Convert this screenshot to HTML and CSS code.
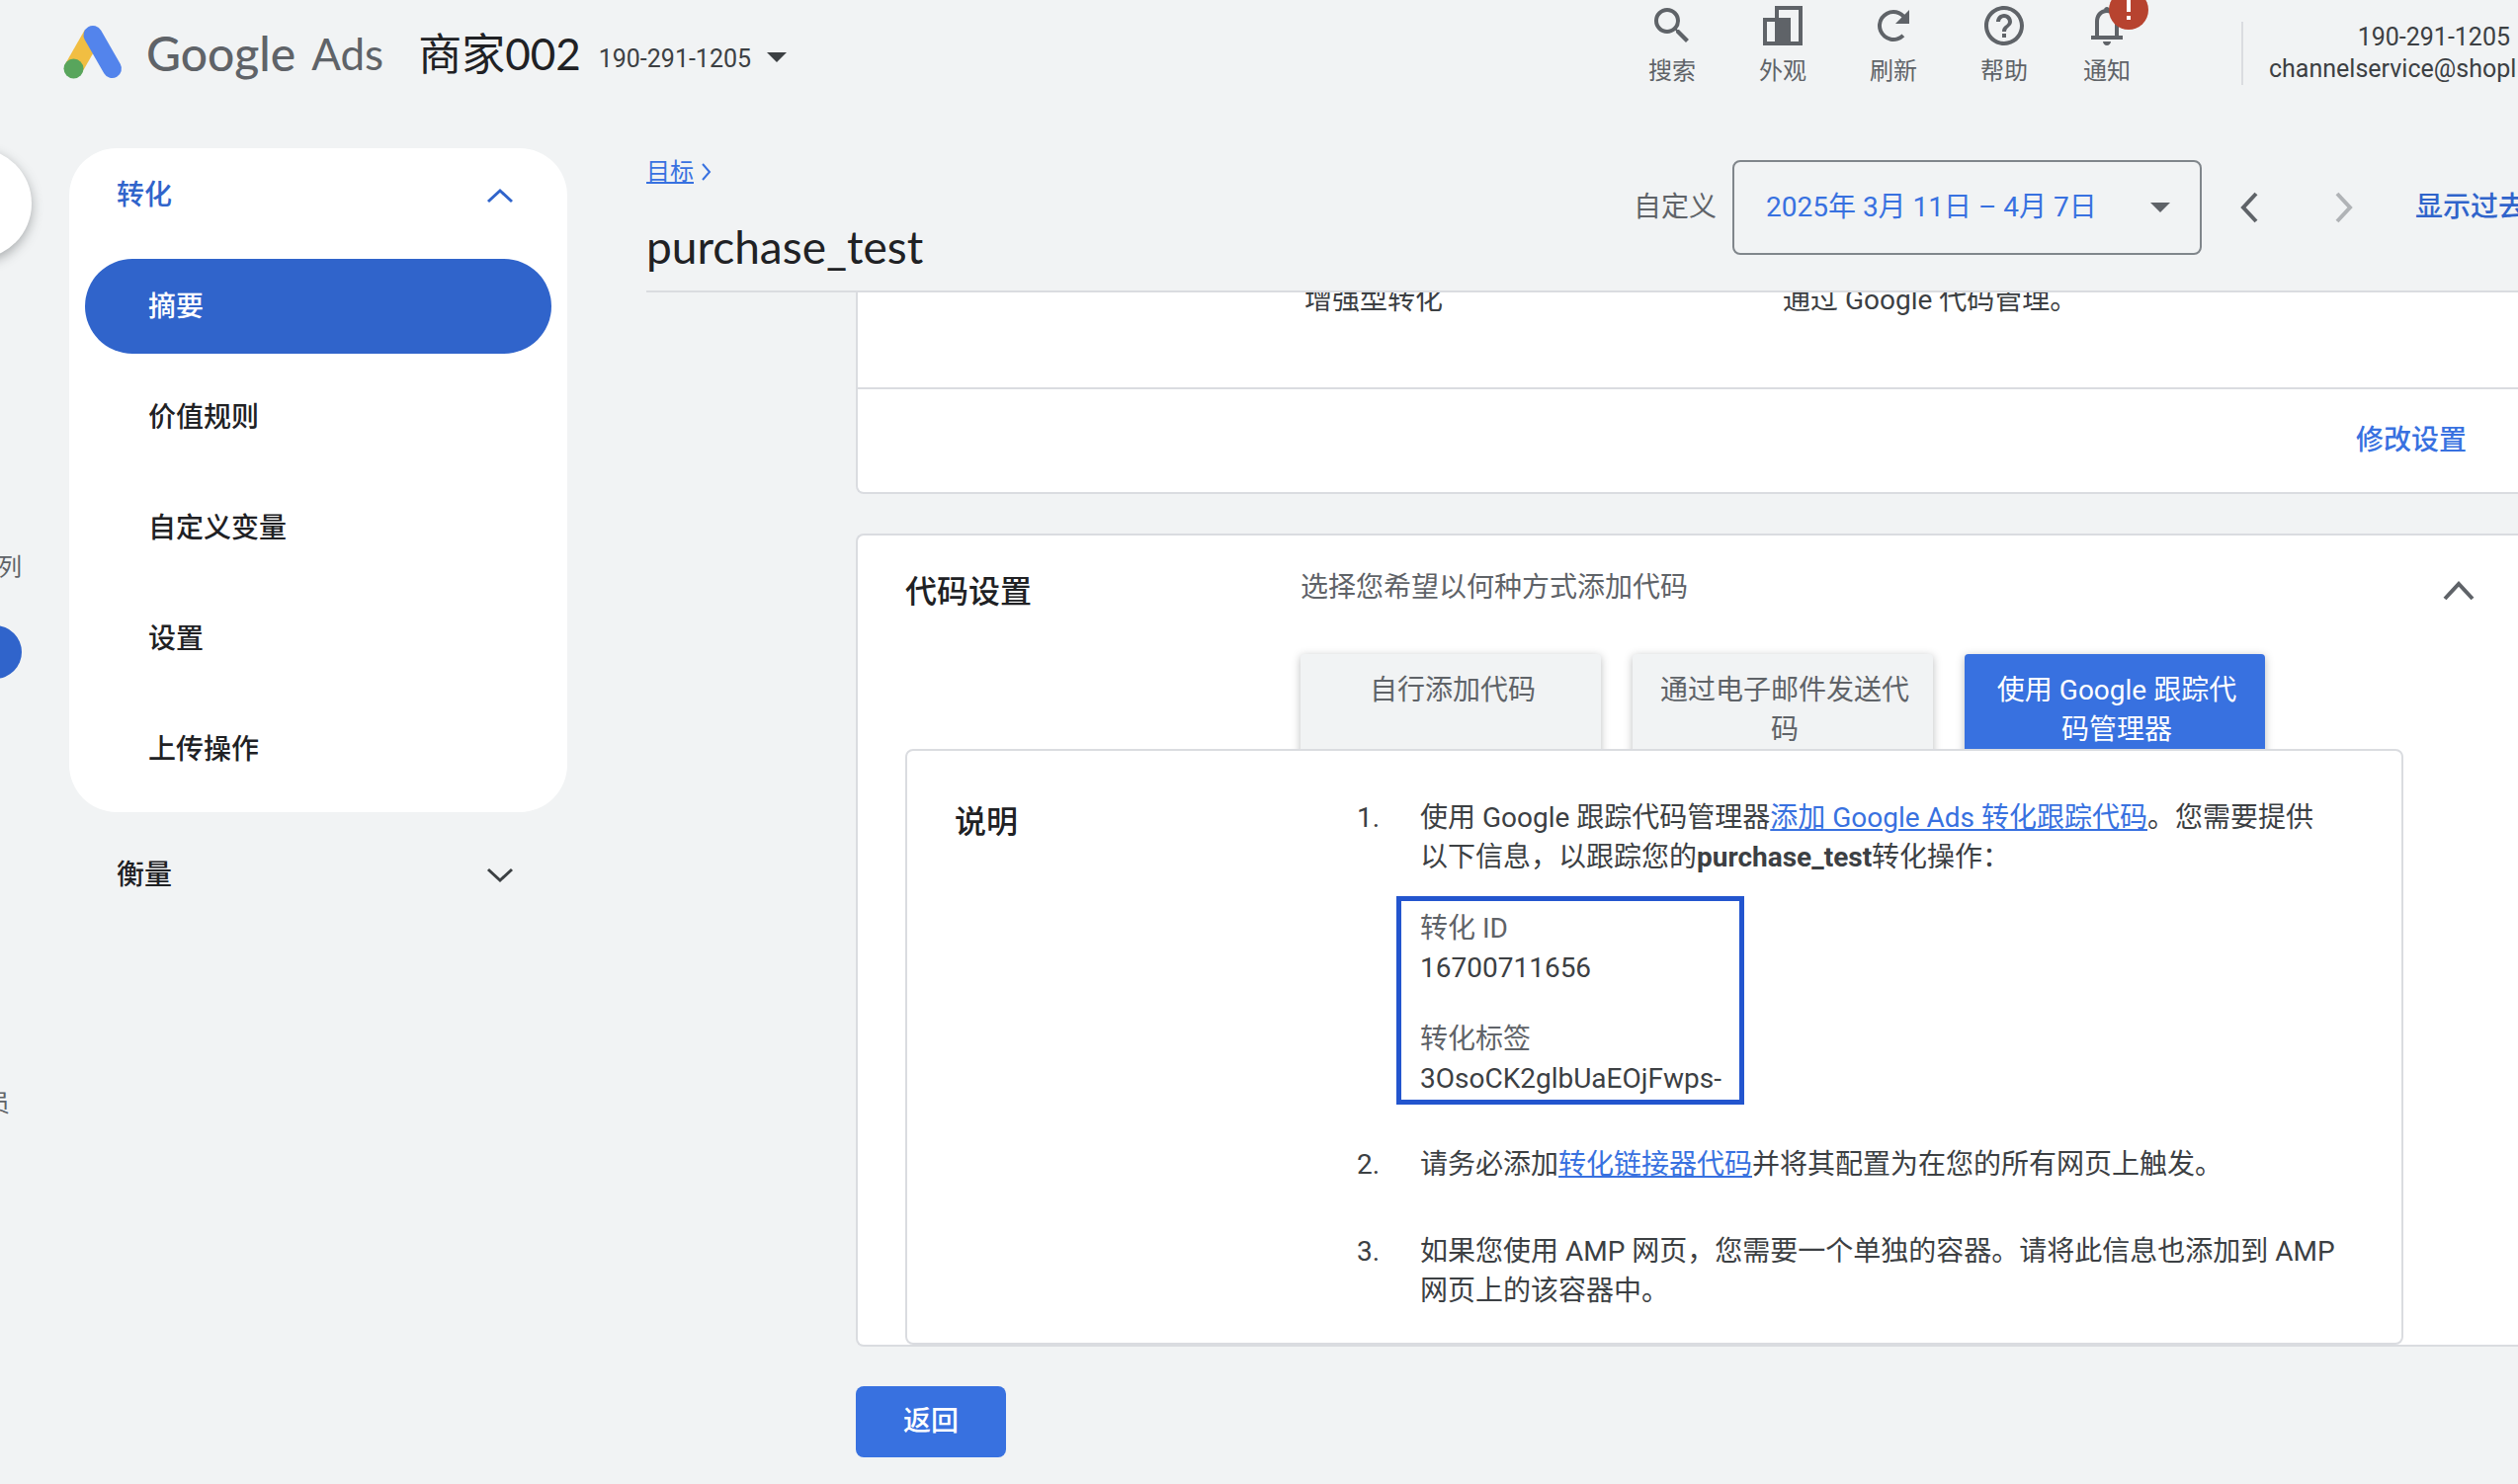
FILE: index.html
```
<!DOCTYPE html>
<html lang="zh-CN">
<head>
    <meta charset="UTF-8">
    <title>purchase_test - Google Ads</title>
    <link rel="stylesheet" href="styles.css">
</head>
<body>
<header class="header">
    <a class="brand" href="#">
        <svg class="logo" width="68" height="64" viewBox="0 0 68 64">
            <path d="M34 15 14 50" stroke="#f1be42" stroke-width="19"/>
            <path d="M34 15.500 53.500 49.500" stroke="#5384ec" stroke-width="19" stroke-linecap="round"/>
            <circle cx="14.500" cy="49.500" r="10" fill="#58a55c"/>
        </svg>
        <span class="brand-google">Google</span>
        <span class="brand-ads">Ads</span>
    </a>
    <button class="account" type="button">
        <span class="account-name">商家002</span>
        <span class="account-id">190-291-1205</span>
        <svg width="20" height="10" viewBox="0 0 20 10"><path d="M0 0h20L10 10z" fill="#3c4043"/></svg>
    </button>
    <nav class="tools">
        <button class="tool" type="button">
            <svg viewBox="0 0 24 24"><path d="M15.500 14h-.79l-.28-.27A6.470 6.470 0 0 0 16 9.500 6.500 6.500 0 1 0 9.500 16c1.610 0 3.090-.59 4.230-1.570l.27.28v.79l5 4.990L20.490 19l-4.990-5zm-6 0C7.010 14 5 11.990 5 9.500S7.010 5 9.500 5 14 7.010 14 9.500 11.990 14 9.500 14z"/></svg>
            <span>搜索</span>
        </button>
        <button class="tool" type="button">
            <svg viewBox="0 0 48 48"><path fill-rule="evenodd" d="M16 4h28v40H4V16h12zM20 8v8h12v24h8V8zM8 20v20h8V20z"/></svg>
            <span>外观</span>
        </button>
        <button class="tool" type="button">
            <svg viewBox="0 0 24 24"><path d="M17.650 6.350A7.960 7.960 0 0 0 12 4a8 8 0 1 0 5.650 13.650l-1.420-1.420A6 6 0 1 1 12 6c1.660 0 3.140.69 4.220 1.780L13 11h7V4z"/></svg>
            <span>刷新</span>
        </button>
        <button class="tool" type="button">
            <svg viewBox="0 0 24 24"><path d="M11 18h2v-2h-2v2zm1-16C6.480 2 2 6.480 2 12s4.480 10 10 10 10-4.480 10-10S17.520 2 12 2zm0 18c-4.410 0-8-3.590-8-8s3.590-8 8-8 8 3.590 8 8-3.590 8-8 8zm0-14c-2.210 0-4 1.790-4 4h2c0-1.100.9-2 2-2s2 .9 2 2c0 2-3 1.750-3 5h2c0-2.250 3-2.500 3-5 0-2.210-1.790-4-4-4z"/></svg>
            <span>帮助</span>
        </button>
        <button class="tool tool-bell" type="button">
            <svg viewBox="0 0 24 24"><path d="M18 17v-7c0-3.070-1.640-5.640-4.500-6.320V4c0-.83-.67-1.500-1.500-1.500S10.500 3.170 10.500 4v-.32C7.630 4.360 6 6.920 6 10v7H4v2h16v-2zm-2 0H8v-7c0-2.480 1.510-4.500 4-4.500s4 2.020 4 4.500zM12 22c1.100 0 2-.9 2-2h-4c0 1.100.9 2 2 2z"/></svg>
            <svg class="badge" viewBox="0 0 40 40"><circle cx="20" cy="20" r="20" fill="#b7432f"/><path d="M18 8h4v14h-4zM18 26h4v4h-4z" fill="#fff"/></svg>
            <span>通知</span>
        </button>
    </nav>
    <div class="user">
        <div class="user-id">190-291-1205</div>
        <div>channelservice@shopl</div>
    </div>
</header>

<div class="layout">
    <!-- 最左侧的窄导航，大部分收在屏幕外 -->
    <aside class="rail">
        <button class="rail-create" type="button" aria-label="创建"></button>
        <a class="rail-text" href="#">列</a>
        <a class="rail-current" href="#" aria-label="目标"></a>
        <a class="rail-text rail-admin" href="#">员</a>
    </aside>

    <nav class="side">
        <div class="side-card">
            <button class="side-head side-head-open" type="button">
                转化
                <svg width="28" height="16" viewBox="0 0 28 16"><path d="M2 14 14 3l12 11"/></svg>
            </button>
            <ul class="side-list">
                <li><a class="current" href="#">摘要</a></li>
                <li><a href="#">价值规则</a></li>
                <li><a href="#">自定义变量</a></li>
                <li><a href="#">设置</a></li>
                <li><a href="#">上传操作</a></li>
            </ul>
        </div>
        <button class="side-head" type="button">
            衡量
            <svg width="28" height="16" viewBox="0 0 28 16"><path d="M2 2l12 11L26 2"/></svg>
        </button>
    </nav>

    <main class="main">
        <div class="topbar">
            <div class="heading">
                <div class="crumb">
                    <a href="#">目标</a>
                    <svg width="10" height="18" viewBox="0 0 10 18"><path d="M1 1l7 8-7 8"/></svg>
                </div>
                <h1>purchase_test</h1>
            </div>
            <div class="dates">
                <span class="dates-label">自定义</span>
                <button class="date-picker" type="button">
                    2025年 3月 11日 – 4月 7日
                    <svg width="20" height="10" viewBox="0 0 20 10"><path d="M0 0h20L10 10z" fill="#5f6368"/></svg>
                </button>
                <button class="arrow" type="button" aria-label="上一个">
                    <svg width="20" height="32" viewBox="0 0 20 32"><path d="M17 2 4 16l13 14"/></svg>
                </button>
                <button class="arrow" type="button" aria-label="下一个" disabled>
                    <svg width="20" height="32" viewBox="0 0 20 32"><path d="M3 2l13 14L3 30"/></svg>
                </button>
                <a class="dates-past" href="#">显示过去</a>
            </div>
        </div>

        <div class="content">
            <section class="card card-settings">
                <div class="setting">
                    <span>增强型转化</span>
                    <span>通过 Google 代码管理。</span>
                </div>
                <div class="card-foot">
                    <button class="text-btn" type="button">修改设置</button>
                </div>
            </section>

            <section class="card card-tag">
                <div class="tag-head">
                    <h2>代码设置</h2>
                    <p>选择您希望以何种方式添加代码</p>
                    <button class="collapse" type="button" aria-label="收起">
                        <svg width="32" height="20" viewBox="0 0 32 20"><path d="M2 18 16 3l14 15"/></svg>
                    </button>
                </div>
                <div class="tabs" role="tablist">
                    <button type="button" role="tab">自行添加代码</button>
                    <button type="button" role="tab">通过电子邮件发送代码</button>
                    <button class="current" type="button" role="tab">使用 Google 跟踪代码管理器</button>
                </div>
                <div class="panel">
                    <h2>说明</h2>
                    <ol>
                        <li>
                            使用 Google 跟踪代码管理器<a href="#">添加 Google Ads 转化跟踪代码</a>。您需要提供<br>以下信息，以跟踪您的<b>purchase_test</b>转化操作：
                            <dl>
                                <dt>转化 ID</dt>
                                <dd>16700711656</dd>
                                <dt>转化标签</dt>
                                <dd>3OsoCK2glbUaEOjFwps-</dd>
                            </dl>
                        </li>
                        <li>请务必添加<a href="#">转化链接器代码</a>并将其配置为在您的所有网页上触发。</li>
                        <li>如果您使用 AMP 网页，您需要一个单独的容器。请将此信息也添加到 AMP 网页上的该容器中。</li>
                    </ol>
                </div>
            </section>

            <button class="back" type="button">返回</button>
        </div>
    </main>
</div>
</body>
</html>
```
FILE: styles.css
```
* {
    box-sizing: border-box;
}
body,h1,h2,p,ul,ol,dl,dd {
    margin: 0;
    padding: 0;
}
body {
    min-height: 100vh;
    overflow-x: hidden;
    background: #f1f3f4;
    color: #3c4043;
    font: 28px/40px Roboto, "Noto Sans CJK SC", sans-serif;
}
ul,ol {
    list-style: none;
}
a {
    color: #3871e0;
}
button {
    padding: 0;
    border: 0;
    background: none;
    color: inherit;
    font: inherit;
    cursor: pointer;
}
svg {
    flex: none;
    fill: none;
}

/* 顶部栏 */
.header {
    display: flex;
    align-items: flex-start;
    height: 150px;
    overflow: hidden;
}
.brand,
.account {
    display: flex;
    align-items: center;
    height: 108px;
    font: 44px/56px Lato, "Noto Sans CJK SC", sans-serif;
    white-space: nowrap;
}
.brand {
    padding-left: 60px;
    color: #5f6368;
    text-decoration: none;
}
.logo {
    margin-bottom: 4px;
}
.brand-google {
    margin: 0 16px 0 20px;
    font-size: 48px;
    font-weight: 500;
}
.account {
    margin-left: 35px;
    color: #202124;
}
.account-id {
    margin: 12px 16px 0 18px;
    color: #3c4043;
    font: 25px/32px Roboto, sans-serif;
}
.account svg {
    margin-top: 8px;
}
.tools {
    display: flex;
    margin-left: auto;
    padding-top: 2px;
}
.tool {
    position: relative;
    display: flex;
    flex-direction: column;
    align-items: center;
    gap: 6px;
    width: 112px;
    color: #5f6368;
    font-size: 24px;
    line-height: 32px;
}
.tool svg {
    width: 48px;
    height: 48px;
    fill: currentColor;
}
.tool-bell {
    width: 96px;
}
.tool .badge {
    position: absolute;
    top: -12px;
    left: 50px;
    width: 40px;
    height: 40px;
}
.user {
    flex: none;
    width: 280px;
    margin: 22px 0 0 88px;
    padding-left: 26px;
    border-left: 2px solid #dadce0;
    font-size: 25px;
    line-height: 32px;
    white-space: nowrap;
}
.user-id {
    padding-right: 8px;
    text-align: right;
}

.layout {
    display: flex;
}

/* 窄导航 */
.rail {
    flex: none;
    display: flex;
    flex-direction: column;
    align-items: flex-end;
    width: 32px;
    margin-right: 38px;
    font-size: 24px;
}
.rail-create {
    width: 112px;
    height: 112px;
    border-radius: 50%;
    background: #fff;
    box-shadow: 0 4px 12px rgba(60, 64, 67, .4);
}
.rail-text {
    margin: 292px 10px 0 0;
    color: #5f6368;
    text-decoration: none;
}
.rail-current {
    width: 112px;
    height: 54px;
    margin: 39px 10px 0 0;
    border-radius: 27px;
    background: #3064cb;
}
.rail-admin {
    margin: 410px 22px 0 0;
}

/* 二级导航 */
.side {
    flex: none;
    width: 504px;
    color: #202124;
    font-weight: 500;
}
.side-card {
    margin-bottom: 16px;
    padding-bottom: 16px;
    border-radius: 48px;
    background: #fff;
}
.side-head {
    display: flex;
    align-items: center;
    justify-content: space-between;
    width: 100%;
    height: 96px;
    padding: 0 54px 0 48px;
}
.side-head svg {
    stroke: #3c4043;
    stroke-width: 3;
}
.side-head-open {
    margin-bottom: 16px;
    color: #3064cb;
}
.side-head-open svg {
    stroke: #3064cb;
}
.side-list {
    display: grid;
    gap: 16px;
    padding: 0 16px;
}
.side-list a {
    display: block;
    padding: 29px 64px 27px;
    border-radius: 48px;
    color: #202124;
    text-decoration: none;
}
.side-list a.current {
    background: #3064cb;
    color: #fff;
}

/* 标题和日期 */
.main {
    flex: 1;
    min-width: 0;
    margin-left: 80px;
}
.topbar {
    display: flex;
    justify-content: space-between;
    height: 146px;
    border-bottom: 2px solid #dadce0;
    white-space: nowrap;
}
.crumb {
    display: flex;
    align-items: center;
    gap: 8px;
    height: 48px;
    font-size: 24px;
}
.crumb svg {
    stroke: #3871e0;
    stroke-width: 2;
}
h1 {
    padding-top: 24px;
    color: #202124;
    font: 46px/56px Lato, sans-serif;
}
.dates {
    display: flex;
    align-items: center;
    height: 120px;
    margin-right: -8px;
}
.dates-label {
    color: #5f6368;
}
.date-picker {
    display: flex;
    align-items: center;
    justify-content: space-between;
    width: 475px;
    height: 96px;
    margin: 0 30px 0 16px;
    padding: 0 30px 0 32px;
    border: 2px solid #80868b;
    border-radius: 8px;
    color: #3871e0;
}
.arrow {
    display: flex;
    justify-content: center;
    width: 36px;
    margin-right: 60px;
}
.arrow svg {
    stroke: #5f6368;
    stroke-width: 4;
}
.arrow:disabled svg {
    stroke: #b0b3b6;
}
.dates-past {
    margin-left: -6px;
    color: #3064cb;
    font-weight: 500;
    text-decoration: none;
}

/* 内容区，滚动后上面一截被标题栏挡住 */
.content {
    overflow: hidden;
    padding: 0 0 24px 212px;
}
.card {
    border: 2px solid #dadce0;
    border-right: 0;
    border-radius: 8px 0 0 8px;
    background: #fff;
}
.card-settings {
    margin-top: -40px;
}
.setting {
    display: flex;
    padding: 26px 0 68px 452px;
}
.setting span:first-child {
    width: 484px;
}
.card-foot {
    display: flex;
    align-items: center;
    justify-content: flex-end;
    height: 106px;
    padding-right: 52px;
    border-top: 2px solid #dadce0;
}
.text-btn {
    color: #3871e0;
    font-weight: 500;
}
.card-tag {
    margin: 40px 0;
    padding-left: 48px;
}
.tag-head {
    display: flex;
    align-items: flex-start;
    height: 120px;
    padding: 33px 44px 0 0;
    color: #5f6368;
}
h2 {
    color: #202124;
    font-size: 32px;
    line-height: 48px;
    font-weight: 500;
}
.tag-head h2 {
    width: 400px;
}
.collapse {
    display: flex;
    align-items: center;
    height: 46px;
    margin-left: auto;
}
.collapse svg {
    stroke: #5f6368;
    stroke-width: 4;
}
.tabs {
    display: flex;
    gap: 32px;
    padding-left: 400px;
}
.tabs button {
    display: flex;
    justify-content: center;
    width: 304px;
    height: 104px;
    margin-bottom: -8px;
    padding: 17px 22px 0 26px;
    border-radius: 4px;
    background: #f1f3f4;
    box-shadow: 0 2px 8px rgba(60, 64, 67, .35);
    color: #5f6368;
}
.tabs button.current {
    background: #3871e0;
    color: #fff;
}
.panel {
    position: relative;
    display: flex;
    width: 1516px;
    max-width: 100%;
    padding: 48px 56px 32px 48px;
    border: 2px solid #dadce0;
    border-radius: 8px;
    background: #fff;
}
.panel h2 {
    flex: none;
    width: 407px;
}
.panel ol {
    flex: 1;
    counter-reset: step;
}
.panel li {
    position: relative;
    padding-left: 64px;
    counter-increment: step;
}
.panel li + li {
    margin-top: 48px;
}
.panel li::before {
    content: counter(step) ".";
    position: absolute;
    left: 0;
}
.panel dl {
    width: 352px;
    margin: 19px 0 -7px -24px;
    padding: 8px 0 1px 19px;
    border: 5px solid #2355ce;
    white-space: nowrap;
}
.panel dt {
    color: #5f6368;
}
.panel dd + dt {
    margin-top: 32px;
}
.back {
    display: block;
    height: 72px;
    padding: 0 48px;
    border-radius: 8px;
    background: #3871e0;
    color: #fff;
    font-weight: 500;
}
```
